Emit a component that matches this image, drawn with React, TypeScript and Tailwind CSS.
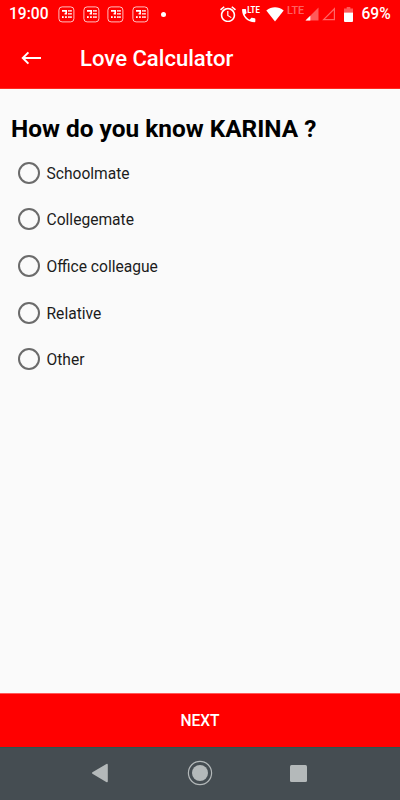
import React from "react";

const OPTIONS = ["Schoolmate", "Collegemate", "Office colleague", "Relative", "Other"];

const AppNotificationIcon: React.FC = () => (
  <svg width="17" height="17" viewBox="0 0 17 17" fill="none">
    <rect x="0.9" y="0.9" width="15" height="15" rx="3.2" stroke="#fff" strokeOpacity="0.75" strokeWidth="1" />
    <g fill="#fff">
      <path d="M4 4h5v4.4H6.6V7h.8V5.7H4z" />
      <rect x="10.2" y="4" width="1.5" height="1.7" />
      <rect x="12.2" y="4" width="1.5" height="1.7" />
      <rect x="10.2" y="7" width="1.5" height="1.6" />
      <rect x="12.2" y="7" width="1.5" height="1.6" />
      <rect x="4" y="10.2" width="1.7" height="1.8" />
      <rect x="7.1" y="10.2" width="1.7" height="1.8" />
      <rect x="10.2" y="10.2" width="1.5" height="1.8" />
      <rect x="12.2" y="10.2" width="1.5" height="1.8" />
    </g>
  </svg>
);

const AlarmIcon: React.FC = () => (
  <svg width="16" height="16" viewBox="2 1.7 20 20" fill="#fff">
    <path d="M22 5.72l-4.6-3.86-1.29 1.53 4.6 3.86L22 5.72zM7.88 3.39L6.6 1.86 2 5.71l1.29 1.53 4.59-3.85zM12.5 8H11v6l4.75 2.85.75-1.23-4-2.37V8zM12 4c-4.97 0-9 4.03-9 9s4.02 9 9 9c4.97 0 9-4.03 9-9s-4.03-9-9-9zm0 16c-3.87 0-7-3.13-7-7s3.13-7 7-7 7 3.13 7 7-3.13 7-7 7z" />
  </svg>
);

const VolteIcon: React.FC = () => (
  <svg width="20" height="17" viewBox="0 0 20 17" fill="#fff">
    <path
      transform="translate(-1.2 0.8) scale(0.74)"
      d="M6.62 10.79c1.44 2.83 3.76 5.14 6.59 6.59l2.2-2.2c.27-.27.67-.36 1.02-.24 1.12.37 2.33.57 3.57.57.55 0 1 .45 1 1V20c0 .55-.45 1-1 1-9.39 0-17-7.61-17-17 0-.55.45-1 1-1h3.5c.55 0 1 .45 1 1 0 1.25.2 2.45.57 3.57.11.35.03.74-.25 1.02l-2.2 2.2z"
    />
    <text x="6.2" y="6.7" fontSize="8.2" fontWeight="700" fontFamily="Roboto, sans-serif" textLength="12.6" lengthAdjust="spacingAndGlyphs">
      LTE
    </text>
  </svg>
);

const StatusBar: React.FC = () => (
  <div className="flex h-7 items-center font-medium text-white">
    <span className="ml-[9px] w-[49px] pt-px text-[15.6px]">19:00</span>
    <div className="flex gap-[7.5px]">
      {[0, 1, 2, 3].map((item) => (
        <AppNotificationIcon key={item} />
      ))}
    </div>
    <span className="ml-[12.5px] size-[5px] rounded-full bg-white" />
    <div className="ml-[54px] flex items-center">
      <AlarmIcon />
      <span className="ml-[5px]">
        <VolteIcon />
      </span>
      <svg className="ml-[4.5px]" width="18" height="15" viewBox="0 0 18 15" fill="#fff">
        <path d="M0.3 3.4C3 1.2 6 0.2 9 0.2s6 1 8.7 3.2L9 14.4z" />
      </svg>
      <span className="mb-[6px] ml-[3.5px] w-[18px] text-[10.8px] leading-none text-white/40">LTE</span>
      <svg width="31" height="14" viewBox="0 0 31 14">
        <path d="M0.5 13.5L13.5 0.5v13z" fill="#fff" fillOpacity="0.35" />
        <path d="M0.5 13.5L5.3 8.7v4.8z" fill="#fff" />
        <path d="M18.6 12.7L29.4 1.8v10.9z" fill="none" stroke="#fff" strokeOpacity="0.4" strokeWidth="1.2" />
      </svg>
      <svg className="ml-[8px]" width="9" height="15" viewBox="0 0 9 15" fill="#fff">
        <path d="M2.7 0h3.6v1.5H9V5.4H0V1.5h2.7z" fillOpacity="0.35" />
        <path d="M0 5.4h9V14a1 1 0 0 1-1 1H1a1 1 0 0 1-1-1z" />
      </svg>
    </div>
    <span className="ml-[8.5px] pt-px text-[15.6px]">69%</span>
  </div>
);

const NavigationBar: React.FC = () => (
  <nav className="grid h-[53px] grid-cols-[1fr_100px_1fr] items-center border-t border-[#2b5550] bg-[#454d52] pb-[2px]">
    <svg className="ml-[91px]" width="18" height="20" viewBox="0 0 18 20" fill="#b4b9ba">
      <path d="M1.4 9.3L15 1.2Q16.8 .2 16.8 2v16.2q0 1.8-1.6.8L1.4 10.8q-1-.8 0-1.5z" />
    </svg>
    <svg className="mx-auto" width="26" height="26" viewBox="0 0 26 26">
      <circle cx="13" cy="13" r="11.6" fill="none" stroke="#b4b9ba" strokeWidth="1.2" />
      <circle cx="13" cy="13" r="8" fill="#b4b9ba" />
    </svg>
    <span className="ml-10 size-[17px] rounded-[1.5px] bg-[#b4b9ba]" />
  </nav>
);

export default function App() {
  return (
    <div className="flex h-[800px] w-[400px] flex-col overflow-hidden bg-[#fafafa] font-['Roboto',sans-serif] text-black">
      <header className="h-[89px] border-b border-[#ff2a20] bg-[#ff0000]">
        <StatusBar />
        <div className="flex h-[60px] items-center">
          <svg className="ml-[21px]" width="21" height="16" viewBox="0 0 21 16" fill="none" stroke="#fff" strokeWidth="2">
            <path d="M20 8H2M7.4 2.4L1.8 8L7.4 13.6" />
          </svg>
          <h1 className="ml-[38px] pt-[2px] text-[22.1px] font-medium text-white">Love Calculator</h1>
        </div>
      </header>

      <main className="flex-1">
        <h2 className="mt-[23px] ml-[11px] text-[24.42px] leading-[34px] font-bold">How do you know KARINA ?</h2>
        <div className="mt-[3.3px]">
          {OPTIONS.map((option) => (
            <label key={option} className="flex h-[46.67px] items-center">
              <input
                type="radio"
                name="relation"
                className="ml-[18px] size-[22px] appearance-none rounded-full border-2 border-[#6b6b6b]"
              />
              <span className="ml-[6.5px] pt-[3.8px] text-[15.6px] text-[#1c1c1c]">{option}</span>
            </label>
          ))}
        </div>
      </main>

      <button className="h-[54px] border-t border-[#ff5a5a] bg-[#ff0000] pt-[2px] text-[15.6px] font-medium text-white">
        NEXT
      </button>
      <NavigationBar />
    </div>
  );
}
